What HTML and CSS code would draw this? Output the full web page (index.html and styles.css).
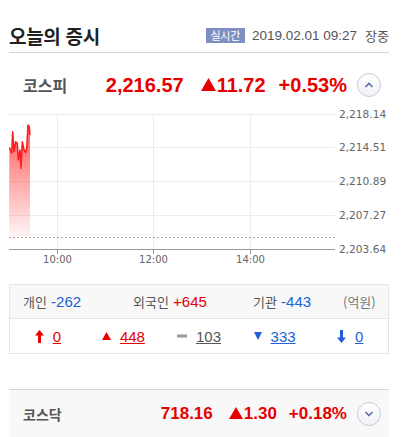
FILE: index.html
```html
<!DOCTYPE html>
<html lang="ko">
<head>
<meta charset="utf-8">
<link rel="stylesheet" href="styles.css">
</head>
<body>
<div class="wrap">
  <div class="head">
    <h1 class="title">오늘의 증시</h1>
    <div class="meta">
      <span class="badge">실시간</span>
      <span class="date">2019.02.01 09:27</span>
      <span class="state">장중</span>
    </div>
  </div>

  <div class="idx idx-open">
    <span class="idx-name">코스피</span>
    <span class="nums">
      <span class="price">2,216.57</span>
      <span class="chg"><svg class="tri" width="15" height="13" viewBox="0 0 15 13"><polygon points="7.5,0 15,13 0,13" fill="#e60000"/></svg>11.72</span>
      <span class="pct">+0.53%</span>
    </span>
    <span class="toggle"><svg width="10" height="6" viewBox="0 0 10 6"><polyline points="1.5,5 5,1.5 8.5,5" fill="none" stroke="#5b6cb0" stroke-width="1.6"/></svg></span>
  </div>

  <svg class="chart" width="380" height="170" viewBox="0 0 380 170">
    <defs>
      <linearGradient id="g" x1="0" y1="0" x2="0" y2="1">
        <stop offset="0" stop-color="#ff2020" stop-opacity="0.75"/>
        <stop offset="1" stop-color="#ff2020" stop-opacity="0.04"/>
      </linearGradient>
    </defs>
    <g stroke="#ececec" stroke-width="1">
      <line x1="0" y1="14.5" x2="326" y2="14.5"/>
      <line x1="0" y1="47.5" x2="326" y2="47.5"/>
      <line x1="0" y1="81.5" x2="326" y2="81.5"/>
      <line x1="0" y1="115.5" x2="326" y2="115.5"/>
      <line x1="48.5" y1="14" x2="48.5" y2="149"/>
      <line x1="144.5" y1="14" x2="144.5" y2="149"/>
      <line x1="241.5" y1="14" x2="241.5" y2="149"/>
    </g>
    <polygon fill="url(#g)" points="0.3,47.3 2.7,53.3 3.7,31.7 5,51.7 6.7,41.7 8.3,43.3 9.3,60 11,50 12,68.3 13.3,41.7 15,50 16.7,52.7 17.7,48.3 19,25 20.3,26.7 21,35 21,137 0,137"/>
    <polyline fill="none" stroke="#ff1a1a" stroke-width="1.5" stroke-linejoin="round" points="0.3,47.3 2.7,53.3 3.7,31.7 5,51.7 6.7,41.7 8.3,43.3 9.3,60 11,50 12,68.3 13.3,41.7 15,50 16.7,52.7 17.7,48.3 19,25 20.3,26.7 21,35"/>
    <line x1="0" y1="137.5" x2="326" y2="137.5" stroke="#aaa" stroke-width="1" stroke-dasharray="2,2"/>
    <line x1="0" y1="149.5" x2="326" y2="149.5" stroke="#999" stroke-width="1"/>
    <g stroke="#999" stroke-width="1">
      <line x1="48.5" y1="149" x2="48.5" y2="154"/>
      <line x1="144.5" y1="149" x2="144.5" y2="154"/>
      <line x1="241.5" y1="149" x2="241.5" y2="154"/>
    </g>
    <g class="ylab">
      <text x="330" y="18">2,218.14</text>
      <text x="330" y="51">2,214.51</text>
      <text x="330" y="85">2,210.89</text>
      <text x="330" y="119">2,207.27</text>
      <text x="330" y="153">2,203.64</text>
    </g>
    <g class="xlab">
      <text x="48.5" y="163">10:00</text>
      <text x="144.5" y="163">12:00</text>
      <text x="241.5" y="163">14:00</text>
    </g>
  </svg>

  <div class="board">
    <div class="investors">
      <span class="inv"><span class="lbl">개인</span> <span class="down">-262</span></span>
      <span class="inv"><span class="lbl">외국인</span> <span class="up">+645</span></span>
      <span class="inv"><span class="lbl">기관</span> <span class="down">-443</span></span>
      <span class="inv unit">(억원)</span>
    </div>
    <div class="breadth">
      <span class="cell red"><svg width="9" height="13" viewBox="0 0 9 13"><polygon points="4.5,0 9,5.5 6,5.5 6,13 3,13 3,5.5 0,5.5" fill="#e60000"/></svg><a class="n">0</a></span>
      <span class="cell red"><svg width="9" height="8" viewBox="0 0 9 8"><polygon points="4.5,0 9,8 0,8" fill="#e60000"/></svg><a class="n">448</a></span>
      <span class="cell grey"><svg width="10" height="4" viewBox="0 0 10 4"><rect x="0" y="0.5" width="10" height="3" fill="#999"/></svg><a class="n">103</a></span>
      <span class="cell blue"><svg width="8" height="8" viewBox="0 0 8 8"><polygon points="0,0 8,0 4,8" fill="#1f5fd8"/></svg><a class="n">333</a></span>
      <span class="cell blue"><svg width="9" height="13" viewBox="0 0 9 13"><polygon points="3,0 6,0 6,7.5 9,7.5 4.5,13 0,7.5 3,7.5" fill="#1f5fd8"/></svg><a class="n">0</a></span>
    </div>
  </div>

  <div class="idx idx-closed">
    <span class="idx-name small">코스닥</span>
    <span class="nums small">
      <span class="price">718.16</span>
      <span class="chg"><svg class="tri" width="14" height="12" viewBox="0 0 14 12"><polygon points="7,0 14,12 0,12" fill="#e60000"/></svg>1.30</span>
      <span class="pct">+0.18%</span>
    </span>
    <span class="toggle"><svg width="10" height="6" viewBox="0 0 10 6"><polyline points="1.5,1 5,4.5 8.5,1" fill="none" stroke="#5b6cb0" stroke-width="1.6"/></svg></span>
  </div>
</div>
</body>
</html>
```

FILE: styles.css
```css
* { box-sizing: border-box; }
html, body { margin: 0; padding: 0; background: #fff; }
body {
  font-family: "Liberation Sans", "Noto Sans CJK KR", sans-serif;
  color: #333;
}
.wrap {
  width: 380px;
  margin-left: 9px;
}
.head {
  display: flex;
  align-items: center;
  justify-content: space-between;
  height: 53px;
  padding-top: 19px;
  border-bottom: 1px solid #d3d4de;
}
.title {
  margin: 0;
  font-family: "Noto Sans CJK KR", sans-serif;
  font-size: 19px;
  font-weight: 700;
  color: #222;
  letter-spacing: -0.3px;
  line-height: 26px;
}
.meta {
  display: flex;
  align-items: center;
}
.badge {
  display: inline-block;
  background: #7e8fc4;
  color: #fff;
  font-family: "Noto Sans CJK KR", sans-serif;
  font-size: 11px;
  line-height: 14px;
  height: 15px;
  padding: 0 5px;
  letter-spacing: -0.3px;
}
.date {
  margin-left: 7px;
  font-size: 13.5px;
  color: #555;
}
.state {
  margin-left: 8px;
  font-family: "Noto Sans CJK KR", sans-serif;
  font-size: 13px;
  color: #555;
}
.idx {
  display: flex;
  align-items: center;
  padding: 0 8px 0 14px;
}
.idx-open {
  height: 47px;
  padding-top: 17px;
}
.idx-closed {
  height: 48px;
  margin-top: 35px;
  border-top: 1px solid #d3d4de;
  background: #f8f8f8;
}
.idx-name {
  font-family: "Noto Sans CJK KR", sans-serif;
  font-weight: 700;
  font-size: 16px;
  color: #555;
  letter-spacing: 0;
}
.idx-name.small { font-size: 14px; }
.nums {
  margin-left: auto;
  display: flex;
  align-items: center;
  font-weight: 700;
  font-size: 20px;
  color: #e60000;
}
.nums.small { font-size: 17px; }
.chg {
  display: inline-flex;
  align-items: center;
  margin-left: 17px;
}
.chg .tri { margin-right: 1px; margin-top: -2px; }
.pct { margin-left: 13px; }
.nums.small .chg { margin-left: 16px; }
.nums.small .pct { margin-left: 12px; }
.toggle {
  margin-left: 10px;
  width: 24px;
  height: 24px;
  border-radius: 50%;
  border: 1px solid #c6cadc;
  background: linear-gradient(#fff, #f1f2f6);
  display: flex;
  align-items: center;
  justify-content: center;
}
.chart { display: block; }
.ylab text {
  font-family: "DejaVu Sans", sans-serif;
  font-size: 10.6px;
  fill: #666;
}
.xlab text {
  font-family: "DejaVu Sans", sans-serif;
  font-size: 10px;
  fill: #666;
  text-anchor: middle;
}
.board {
  margin-top: 14px;
  border: 1px solid #e6e6e6;
}
.investors {
  display: grid;
  grid-template-columns: 110px 120px 90px auto;
  align-items: center;
  height: 34px;
  padding-left: 13px;
  background: #f8f8f8;
  border-bottom: 1px solid #e6e6e6;
  font-size: 15px;
}
.lbl {
  font-family: "Noto Sans CJK KR", sans-serif;
  font-size: 13px;
  color: #555;
}
.unit {
  font-family: "Noto Sans CJK KR", sans-serif;
  font-size: 13px;
  color: #777;
}
.up { color: #e60000; }
.down { color: #1d5fd9; }
.breadth {
  display: grid;
  grid-template-columns: repeat(5, 1fr);
  height: 34px;
  align-items: center;
  background: #fff;
}
.cell {
  display: flex;
  align-items: center;
  justify-content: center;
  gap: 9px;
  font-size: 15px;
}
.cell .n { text-decoration: underline; }
.cell.red .n { color: #e60000; }
.cell.grey .n { color: #555; }
.cell.blue .n { color: #1f5fd8; }
```
